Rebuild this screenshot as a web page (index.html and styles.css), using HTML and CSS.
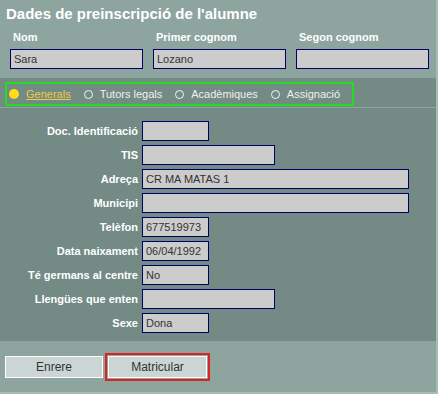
FILE: index.html
```html
<!DOCTYPE html>
<html lang="ca">
<head>
    <meta charset="UTF-8">
    <meta name="viewport" content="width=device-width, initial-scale=1.0">
    <title>Dades de preinscripció</title>
    <link rel="stylesheet" href="styles.css">
</head>
<body>

<div class="page">
    <div class="head">
        <h1 class="title">Dades de preinscripció de l'alumne</h1>
        <div class="names">
            <div class="name-field">
                <label for="nom">Nom</label>
                <input type="text" id="nom" value="Sara">
            </div>
            <div class="name-field">
                <label for="cognom1">Primer cognom</label>
                <input type="text" id="cognom1" value="Lozano">
            </div>
            <div class="name-field">
                <label for="cognom2">Segon cognom</label>
                <input type="text" id="cognom2" value="">
            </div>
        </div>
    </div>

    <div class="tabs">
        <div class="tab-box">
            <span class="tab active"><span class="dot"></span><a href="#">Generals</a></span>
            <span class="tab"><span class="dot"></span>Tutors legals</span>
            <span class="tab"><span class="dot"></span>Acadèmiques</span>
            <span class="tab"><span class="dot"></span>Assignació</span>
        </div>
    </div>

    <div class="form">
        <label for="doc">Doc. Identificació</label>
        <input type="text" id="doc" class="short">

        <label for="tis">TIS</label>
        <input type="text" id="tis" class="mid">

        <label for="adreca">Adreça</label>
        <input type="text" id="adreca" class="long" value="CR MA MATAS 1">

        <label for="municipi">Municipi</label>
        <input type="text" id="municipi" class="long">

        <label for="telefon">Telèfon</label>
        <input type="text" id="telefon" class="short" value="677519973">

        <label for="naixament">Data naixament</label>
        <input type="text" id="naixament" class="short" value="06/04/1992">

        <label for="germans">Té germans al centre</label>
        <input type="text" id="germans" class="short" value="No">

        <label for="llengues">Llengües que enten</label>
        <input type="text" id="llengues" class="mid">

        <label for="sexe">Sexe</label>
        <input type="text" id="sexe" class="short" value="Dona">
    </div>

    <div class="foot">
        <button class="btn">Enrere</button>
        <button class="btn focused">Matricular</button>
    </div>
</div>

</body>
</html>
```

FILE: styles.css
```css
html, body {
    margin: 0;
    padding: 0;
    background-color: #a9b9b6;
}

body {
    font-family: 'Liberation Sans', Arial, sans-serif;
    font-size: 11px;
}

.page {
    width: 436px;
    height: 392px;
    background-color: #738a85;
    overflow: hidden;
}

/* capçalera */
.head {
    background-color: #8da49f;
    padding: 4px 0 9px 0;
}

.title {
    margin: 0 0 6px 6px;
    font-size: 15px;
    line-height: 20px;
    color: #ffffff;
    font-weight: bold;
}

.names {
    display: flex;
    gap: 10px;
    padding-left: 10px;
}

.name-field {
    display: flex;
    flex-direction: column;
    gap: 5px;
}

.name-field label {
    color: #ffffff;
    font-weight: bold;
    line-height: 14px;
    padding-left: 3px;
}

input {
    box-sizing: border-box;
    height: 20px;
    background-color: #cccccc;
    border: 1px solid #000066;
    padding: 0 3px;
    font-family: 'Liberation Sans', Arial, sans-serif;
    font-size: 11px;
    color: #333333;
    outline: none;
}

.name-field input {
    width: 133px;
}

/* pestanyes */
.tabs {
    padding: 4px 0 1px 5px;
    border-bottom: 1px solid #8da49f;
}

.tab-box {
    display: inline-flex;
    align-items: center;
    height: 20px;
    padding: 0 12px 0 2px;
    border: 2px solid #22dd22;
    gap: 13px;
}

.tab {
    display: flex;
    align-items: center;
    gap: 7px;
    color: #f0f0f0;
    font-size: 11px;
}

.dot {
    display: inline-block;
    width: 9px;
    height: 9px;
    box-sizing: border-box;
    border: 1px solid #f4f4f4;
    border-radius: 50%;
}

.tab.active .dot {
    width: 10px;
    height: 10px;
    border: none;
    background-color: #ffdd11;
}

.tab a {
    color: #eecc44;
    text-decoration: underline;
}

/* formulari */
.form {
    display: grid;
    grid-template-columns: 138px auto;
    column-gap: 4px;
    row-gap: 4px;
    padding: 13px 0 8px 0;
    align-items: center;
    justify-items: start;
}

.form label {
    justify-self: end;
    color: #ffffff;
    font-weight: bold;
}

.short {
    width: 67px;
}

.mid {
    width: 133px;
}

.long {
    width: 267px;
}

/* peu */
.foot {
    background-color: #8da49f;
    height: 53px;
    box-sizing: border-box;
    padding: 15px 0 0 5px;
    display: flex;
    align-items: flex-start;
    gap: 5px;
}

.btn {
    width: 98px;
    height: 22px;
    background-color: #cbd6d4;
    border: 1px solid #ffffff;
    font-family: 'Liberation Sans', Arial, sans-serif;
    font-size: 12px;
    color: #333333;
    cursor: pointer;
}

.btn.focused {
    width: 99px;
    outline: 2px solid #dd2222;
    outline-offset: 1px;
}
```
